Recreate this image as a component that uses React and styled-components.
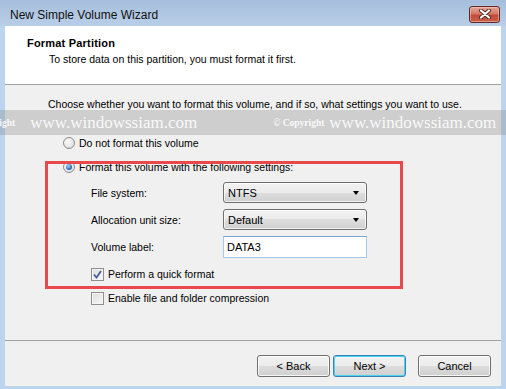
import React from "react";
import styled, { createGlobalStyle } from "styled-components";

const GlobalStyle = createGlobalStyle`
  html, body {
    margin: 0;
    padding: 0;
    background: #bcd4ee;
  }
  body {
    font-family: "Liberation Sans", Arial, sans-serif;
    font-size: 10.5px;
    color: #000;
  }
`;

const site = "www.windowssiam.com";

export default function App() {
  return (
    <>
      <GlobalStyle />
      <Window>
        <TitleBar>
          <Title>New Simple Volume Wizard</Title>
          <CloseButton aria-label="Close">
            <svg width="14" height="10" viewBox="0 0 14 10">
              <path d="M3 1.5 L11 8.5 M11 1.5 L3 8.5" stroke="#4a2a2a" strokeWidth="4" strokeLinecap="round" />
              <path d="M3 1.5 L11 8.5 M11 1.5 L3 8.5" stroke="#fff" strokeWidth="2.2" strokeLinecap="round" />
            </svg>
          </CloseButton>
        </TitleBar>

        <Client>
          <Header>
            <HeaderTitle>Format Partition</HeaderTitle>
            <HeaderSub>To store data on this partition, you must format it first.</HeaderSub>
          </Header>

          <Body>
            <Intro>Choose whether you want to format this volume, and if so, what settings you want to use.</Intro>

            <Options>
              <OptionRow>
                <Radio />
                <span>Do not format this volume</span>
              </OptionRow>
              <OptionRow $top={10}>
                <Radio $checked />
                <span>Format this volume with the following settings:</span>
              </OptionRow>

              <Settings>
                <Label>File system:</Label>
                <Combo>
                  <span>NTFS</span>
                  <Arrow />
                </Combo>
                <Label>Allocation unit size:</Label>
                <Combo>
                  <span>Default</span>
                  <Arrow />
                </Combo>
                <Label>Volume label:</Label>
                <TextBox>DATA3</TextBox>
              </Settings>

              <CheckRow $top={9}>
                <Checkbox>
                  <svg width="9" height="9" viewBox="0 0 9 9">
                    <path d="M1 4.5 L3.5 7.5 L8 1" fill="none" stroke="#4a5f97" strokeWidth="1.8" />
                  </svg>
                </Checkbox>
                <span>Perform a quick format</span>
              </CheckRow>
              <CheckRow $top={10}>
                <Checkbox />
                <span>Enable file and folder compression</span>
              </CheckRow>
            </Options>

            <Highlight />
          </Body>

          <Footer>
            <Button>&lt; Back</Button>
            <Button $default>Next &gt;</Button>
            <Button $gap={12}>Cancel</Button>
          </Footer>
        </Client>

        <Watermark>
          <Small $left={-36}>© Copyright</Small>
          <Big $left={15}>{site}</Big>
          <Small $left={76}>© Copyright</Small>
          <Big $left={5}>{site}</Big>
        </Watermark>
      </Window>
    </>
  );
}

const Window = styled.div`
  position: relative;
  width: 506px;
  height: 389px;
  display: flex;
  flex-direction: column;
  background: #bcd4ee;
  overflow: hidden;
`;

const TitleBar = styled.div`
  height: 26px;
  flex: none;
  display: flex;
  align-items: center;
  justify-content: space-between;
  padding: 0 6px 0 10px;
  background: linear-gradient(#a6bedb, #b9cfe8);
`;

const Title = styled.div`
  font-size: 12px;
  color: #111;
  padding-top: 4px;
`;

const CloseButton = styled.div`
  width: 29px;
  height: 15px;
  margin-top: 2px;
  border: 1px solid #5e2a2a;
  border-radius: 3px;
  display: flex;
  align-items: center;
  justify-content: center;
  background: linear-gradient(#e5a596 0%, #d47a68 45%, #c24a36 55%, #c9624a 100%);
  box-shadow: inset 0 0 0 1px rgba(255, 200, 190, 0.5);
`;

const Client = styled.div`
  flex: 1;
  margin: 0 5px 3px 5px;
  background: #f0f0f0;
  display: flex;
  flex-direction: column;
`;

const Header = styled.div`
  flex: none;
  box-sizing: border-box;
  height: 59px;
  background: #fff;
  border-bottom: 1px solid #a0a0a0;
  padding: 10px 0 0 22px;
`;

const HeaderTitle = styled.div`
  font-size: 11px;
  font-weight: bold;
  letter-spacing: 0.2px;
  line-height: 14px;
`;

const HeaderSub = styled.div`
  line-height: 14px;
  margin-top: 2px;
  padding-left: 22px;
`;

const Body = styled.div`
  position: relative;
  flex: 1;
  padding: 12px 0 0 43px;
`;

const Intro = styled.div`
  line-height: 14px;
`;

const Options = styled.div`
  margin: 25px 0 0 15px;
  display: flex;
  flex-direction: column;
`;

const OptionRow = styled.div`
  display: flex;
  align-items: center;
  gap: 4px;
  height: 14px;
  margin-top: ${(p) => p.$top || 0}px;
`;

const Radio = styled.span`
  width: 10px;
  height: 10px;
  border-radius: 50%;
  border: 1px solid #8a8c8f;
  background: radial-gradient(circle at 40% 35%, #fdfdfd, #d6d6d6);
  display: flex;
  align-items: center;
  justify-content: center;
  &::after {
    content: "";
    display: ${(p) => (p.$checked ? "block" : "none")};
    width: 6px;
    height: 6px;
    border-radius: 50%;
    background: radial-gradient(circle at 40% 35%, #a8d8f8, #1e5fa8 70%, #163f78);
  }
`;

const Settings = styled.div`
  display: grid;
  grid-template-columns: 132px 144px;
  grid-template-rows: 21px 21px 22px;
  row-gap: 6px;
  align-items: center;
  margin: 8px 0 0 28px;
`;

const Label = styled.div``;

const Combo = styled.div`
  box-sizing: border-box;
  height: 21px;
  display: flex;
  align-items: center;
  justify-content: space-between;
  padding: 0 7px 0 4px;
  font-size: 11px;
  border: 1px solid #707070;
  border-radius: 3px;
  background: linear-gradient(#f3f3f3 0%, #ebebeb 50%, #dedede 50%, #d0d0d0 100%);
  box-shadow: inset 0 0 0 1px rgba(255, 255, 255, 0.7);
`;

const Arrow = styled.span`
  width: 0;
  height: 0;
  border-left: 3.5px solid transparent;
  border-right: 3.5px solid transparent;
  border-top: 4px solid #000;
`;

const TextBox = styled.div`
  box-sizing: border-box;
  height: 22px;
  display: flex;
  align-items: center;
  padding-left: 3px;
  font-size: 11px;
  background: #fff;
  border: 1px solid #a9c9ea;
  border-top-color: #7aa6d6;
`;

const CheckRow = styled.div`
  display: flex;
  align-items: center;
  gap: 4px;
  height: 14px;
  margin: ${(p) => p.$top || 0}px 0 0 28px;
`;

const Checkbox = styled.span`
  box-sizing: border-box;
  width: 13px;
  height: 13px;
  border: 1px solid #8e8f8f;
  background: linear-gradient(135deg, #dcdcdc, #f8f8f8);
  box-shadow: inset 0 0 0 1px #f4f4f4;
  display: flex;
  align-items: center;
  justify-content: center;
`;

const Highlight = styled.div`
  position: absolute;
  left: 40px;
  top: 76px;
  width: 352px;
  height: 122px;
  border: 3px solid #e8494a;
  pointer-events: none;
`;

const Footer = styled.div`
  flex: none;
  height: 46px;
  box-sizing: border-box;
  border-top: 1px solid #a0a0a0;
  display: flex;
  justify-content: flex-end;
  align-items: flex-start;
  padding: 14px 10px 0 0;
  gap: 3px;
  font-size: 11px;
`;

const Button = styled.div`
  box-sizing: border-box;
  width: 73px;
  height: 22px;
  display: flex;
  align-items: center;
  justify-content: center;
  margin-left: ${(p) => (p.$gap ? p.$gap - 3 : 0)}px;
  border: 1px solid ${(p) => (p.$default ? "#3c7fb1" : "#707070")};
  border-radius: 3px;
  background: linear-gradient(#f2f2f2 0%, #ebebeb 50%, #dddddd 50%, #cfcfcf 100%);
  box-shadow: inset 0 0 0 1px ${(p) => (p.$default ? "#48d4f2" : "rgba(255,255,255,0.8)")};
`;

const Watermark = styled.div`
  position: absolute;
  left: 0;
  right: 0;
  top: 110px;
  height: 25px;
  display: flex;
  align-items: center;
  white-space: nowrap;
  overflow: hidden;
  background: rgba(128, 128, 128, 0.3);
  pointer-events: none;
  font-family: "Liberation Serif", "Times New Roman", serif;
  color: rgba(255, 255, 255, 0.9);
`;

const Small = styled.span`
  flex: none;
  margin-left: ${(p) => p.$left}px;
  font-size: 9.5px;
  font-weight: bold;
`;

const Big = styled.span`
  flex: none;
  margin-left: ${(p) => p.$left}px;
  font-size: 17px;
`;
